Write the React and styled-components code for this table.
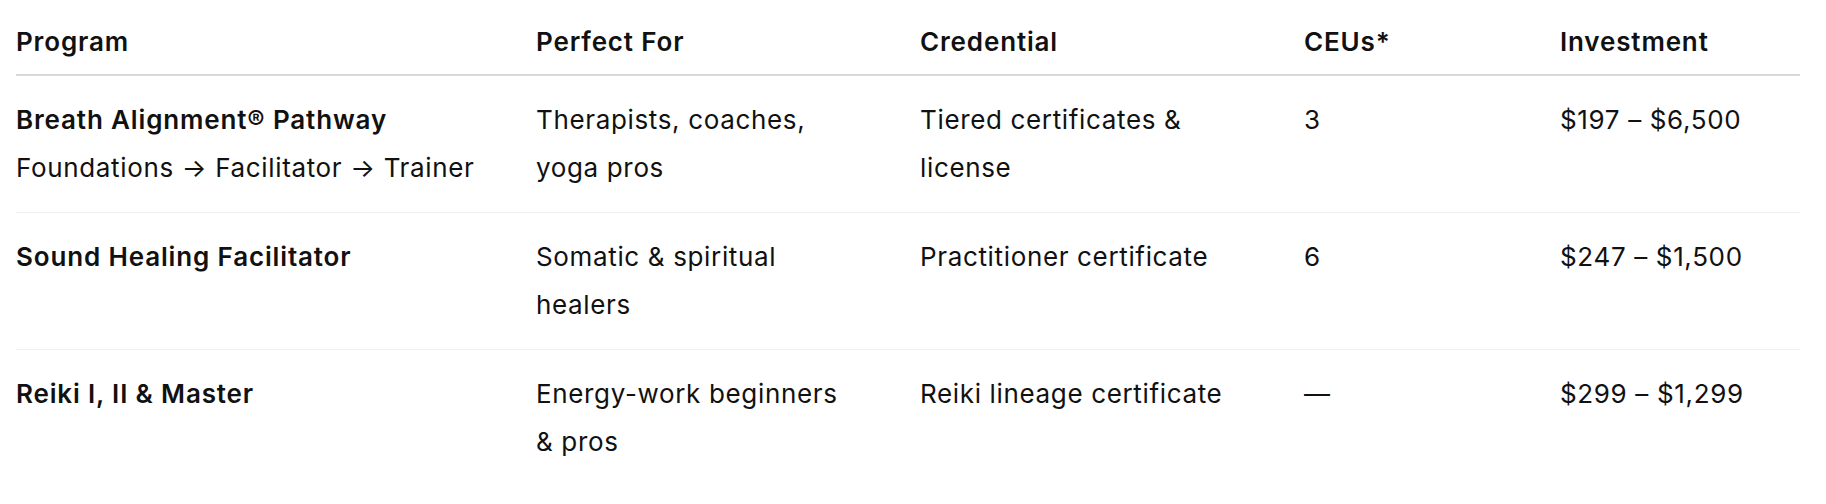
import React from "react";
import styled, { createGlobalStyle } from "styled-components";

const Global = createGlobalStyle`
  html, body { margin: 0; padding: 0; background: #ffffff; }
  body {
    font-family: Inter, "Noto Sans", "Liberation Sans", sans-serif;
    color: #111111;
    -webkit-font-smoothing: antialiased;
  }
`;

const Wrap = styled.div`
  padding: 0 26px 0 16px;
`;

const Table = styled.table`
  width: 100%;
  border-collapse: collapse;
  table-layout: fixed;
  font-size: 26px;
  line-height: 48px;
  letter-spacing: 0.65px;
`;

const HeadCell = styled.th`
  text-align: left;
  font-weight: 600;
  letter-spacing: 0.85px;
  padding: 18px 24px 8px 0;
  border-bottom: 2px solid #d9d9d9;
  vertical-align: top;
`;

const Row = styled.tr`
  border-bottom: ${(p) => (p.$last ? "none" : "1px solid #efefef")};
`;

const Cell = styled.td`
  padding: 20px ${(p) => p.$gutter || 24}px 20px 0;
  vertical-align: top;
  font-weight: ${(p) => (p.$strong ? 600 : 400)};
  letter-spacing: ${(p) => (p.$strong ? "0.85px" : "0.65px")};
`;

const Sub = styled.span`
  display: block;
  font-weight: 400;
  letter-spacing: 0.65px;
`;

const cols = [520, 384, 384, 256, 240];

const rows = [
  {
    name: "Breath Alignment® Pathway",
    sub: "Foundations → Facilitator → Trainer",
    forWho: "Therapists, coaches, yoga pros",
    cred: "Tiered certificates & license",
    ceu: "3",
    price: "$197 – $6,500",
  },
  {
    name: "Sound Healing Facilitator",
    forWho: "Somatic & spiritual healers",
    cred: "Practitioner certificate",
    ceu: "6",
    price: "$247 – $1,500",
  },
  {
    name: "Reiki I, II & Master",
    forWho: "Energy-work beginners & pros",
    cred: "Reiki lineage certificate",
    ceu: "—",
    price: "$299 – $1,299",
  },
];

export default function App() {
  return (
    <Wrap>
      <Global />
      <Table>
        <colgroup>
          {cols.map((w, i) => (
            <col key={i} style={{ width: w }} />
          ))}
        </colgroup>
        <thead>
          <tr>
            <HeadCell>Program</HeadCell>
            <HeadCell>Perfect For</HeadCell>
            <HeadCell>Credential</HeadCell>
            <HeadCell>CEUs*</HeadCell>
            <HeadCell>Investment</HeadCell>
          </tr>
        </thead>
        <tbody>
          {rows.map((r, i) => (
            <Row key={r.name} $last={i === rows.length - 1}>
              <Cell $strong>
                {r.name}
                {r.sub && <Sub>{r.sub}</Sub>}
              </Cell>
              <Cell $gutter={64}>{r.forWho}</Cell>
              <Cell $gutter={64}>{r.cred}</Cell>
              <Cell>{r.ceu}</Cell>
              <Cell>{r.price}</Cell>
            </Row>
          ))}
        </tbody>
      </Table>
    </Wrap>
  );
}
